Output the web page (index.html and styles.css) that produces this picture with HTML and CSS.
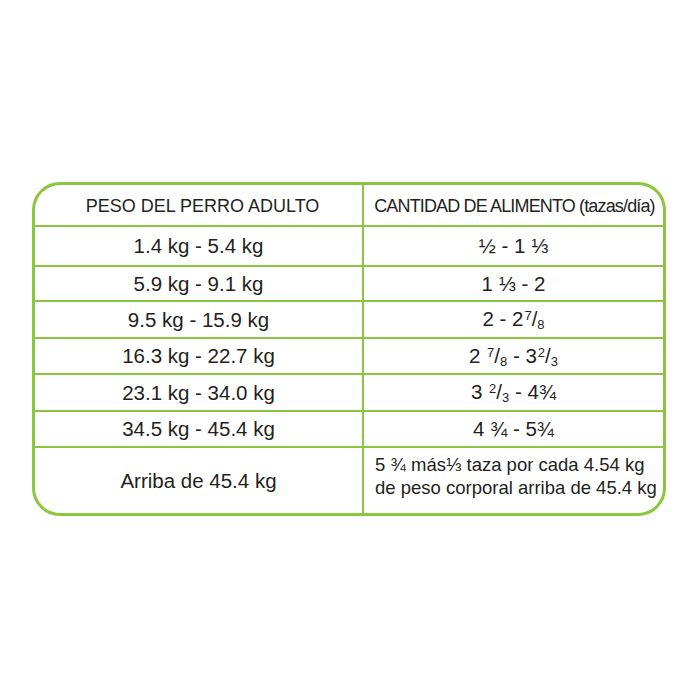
FILE: index.html
```html
<!DOCTYPE html>
<html lang="es">
<head>
<meta charset="utf-8">
<title>Tabla de alimentación</title>
<link rel="stylesheet" href="styles.css">
</head>
<body>
<div class="page">
  <div class="table">
    <div class="cell head head-left"><span>PESO DEL PERRO ADULTO</span></div>
    <div class="cell head head-right"><span>CANTIDAD DE ALIMENTO (tazas/día)</span></div>

    <div class="cell"><span>1.4 kg - 5.4 kg</span></div>
    <div class="cell"><span>½ - 1 ⅓</span></div>

    <div class="cell"><span>5.9 kg - 9.1 kg</span></div>
    <div class="cell"><span>1 ⅓ - 2</span></div>

    <div class="cell"><span>9.5 kg - 15.9 kg</span></div>
    <div class="cell"><span>2 - 2<span class="num">7</span>/<span class="den">8</span></span></div>

    <div class="cell"><span>16.3 kg - 22.7 kg</span></div>
    <div class="cell"><span>2 <span class="num">7</span>/<span class="den">8</span> - 3<span class="num">2</span>/<span class="den">3</span></span></div>

    <div class="cell"><span>23.1 kg - 34.0 kg</span></div>
    <div class="cell"><span>3 <span class="num">2</span>/<span class="den">3</span> - 4¾</span></div>

    <div class="cell"><span>34.5 kg - 45.4 kg</span></div>
    <div class="cell"><span>4 ¾ - 5¾</span></div>

    <div class="cell"><span>Arriba de 45.4 kg</span></div>
    <div class="cell note"><span>5 ¾ más⅓ taza por cada 4.54 kg<br>de peso corporal arriba de 45.4 kg</span></div>
  </div>
</div>
</body>
</html>
```

FILE: styles.css
```css
html, body {
  margin: 0;
  padding: 0;
  background: #ffffff;
}

.page {
  padding: 182px 0 0 32px;
}

.table {
  width: 634px;
  height: 334px;
  box-sizing: border-box;
  border: 3px solid #8cc63f;
  border-radius: 28px;
  overflow: hidden;
  background: #8cc63f;
  display: grid;
  grid-template-columns: 327px 299px;
  grid-template-rows: 40px 38px 33px 35px 34px 35px 34px 65px;
  gap: 2px;
  font-family: "Liberation Sans", Arial, sans-serif;
  color: #231f20;
}

.cell {
  background: #ffffff;
  display: flex;
  align-items: center;
  justify-content: center;
  font-size: 20.5px;
  white-space: nowrap;
}

.head {
  font-size: 18px;
  padding-top: 3px;
  box-sizing: border-box;
}

.head-left {
  padding-left: 8px;
}

.head-right {
  letter-spacing: -0.85px;
  padding-left: 2px;
}

.num {
  font-size: 13px;
  vertical-align: 6px;
  padding-left: 1px;
}

.den {
  font-size: 13px;
  vertical-align: -3px;
}

.note {
  justify-content: flex-start;
  font-size: 18.5px;
  line-height: 23px;
  padding: 0 0 10px 11px;
  box-sizing: border-box;
  white-space: normal;
}
```
